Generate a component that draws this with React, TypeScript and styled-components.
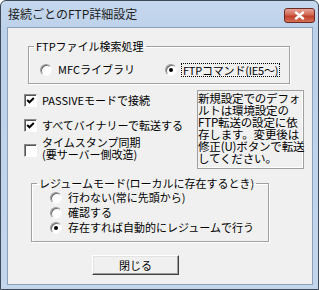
import styled, { createGlobalStyle } from "styled-components";

const GlobalStyle = createGlobalStyle`
  html, body {
    margin: 0;
    padding: 0;
    background: #ffffff;
  }
  body {
    font-family: "Noto Sans CJK JP", "Liberation Sans", sans-serif;
  }
`;

const Window = styled.div`
  width: 319px;
  height: 290px;
  box-sizing: border-box;
  display: flex;
  flex-direction: column;
  border: 1px solid #3e4a57;
  border-radius: 6px 6px 0 0;
  background: linear-gradient(#c6d8ee, #bcd1ea 30px, #c3d6ec);
`;

const TitleBar = styled.div`
  height: 26px;
  display: flex;
  align-items: center;
  justify-content: space-between;
  padding: 0 3px 0 7px;
`;

const Title = styled.span`
  font-size: 12px;
  line-height: 14px;
  color: #1e1e1e;
  margin-top: -1px;
`;

const CloseButton = styled.div`
  width: 29px;
  height: 13px;
  margin-top: 2px;
  border: 1px solid #6b2a22;
  border-radius: 3px;
  background: linear-gradient(#e8a59a, #d1664f 45%, #c0412b 55%, #d46f54);
  display: flex;
  align-items: center;
  justify-content: center;
`;

const Client = styled.div`
  flex: 1;
  margin: 0 5px 4px 6px;
  border: 1px solid #8da2ba;
  background: #f0f0f0;
  padding: 12px 0 0 0;
  display: flex;
  flex-direction: column;
  font-size: 11px;
  color: #000;
`;

const Group = styled.fieldset<{ $left: number; $width: number; $height: number; $top?: number }>`
  margin: ${(p) => p.$top ?? 0}px 0 0 ${(p) => p.$left}px;
  width: ${(p) => p.$width}px;
  height: ${(p) => p.$height}px;
  box-sizing: border-box;
  padding: 0;
  border: 1px solid #a0a0a0;
  box-shadow: inset 1px 1px 0 #ffffff, 1px 1px 0 #ffffff;
  min-width: 0;
`;

const Legend = styled.legend`
  margin-left: 5px;
  padding: 0 2px;
  font-size: 11px;
  line-height: 13px;
`;

const SearchRow = styled.div`
  display: grid;
  grid-template-columns: 125px 1fr;
  padding: 10px 0 0 11px;
`;

const RadioList = styled.div`
  display: flex;
  flex-direction: column;
  gap: 2px;
  padding: 1px 0 0 18px;
`;

const Option = styled.label`
  display: flex;
  align-items: center;
  gap: 6px;
  height: 13px;
  line-height: 13px;
  white-space: nowrap;
`;

const RadioDot = styled.span<{ $on?: boolean }>`
  width: 12px;
  height: 12px;
  box-sizing: border-box;
  flex: none;
  border-radius: 50%;
  border: 1px solid;
  border-color: #9a9a9a #f8f8f8 #f8f8f8 #9a9a9a;
  background: #ffffff;
  box-shadow: inset 1px 1px 0 #6a6a6a;
  display: flex;
  align-items: center;
  justify-content: center;
  &::after {
    content: "";
    width: 4px;
    height: 4px;
    border-radius: 50%;
    background: ${(p) => (p.$on ? "#000" : "transparent")};
  }
`;

const Focused = styled.span`
  border: 1px dotted #000;
  padding: 0 1px;
  margin-left: -2px;
  line-height: 12px;
  letter-spacing: -0.2px;
`;

const Middle = styled.div`
  display: flex;
  align-items: flex-start;
  height: 79px;
  margin-top: 6px;
`;

const Checks = styled.div`
  width: 173px;
  padding: 4px 0 0 16px;
  display: flex;
  flex-direction: column;
  gap: 12px;
`;

const CheckRow = styled.label`
  display: flex;
  align-items: flex-start;
  gap: 5px;
  line-height: 13px;
  white-space: nowrap;
`;

const CheckBox = styled.span`
  width: 13px;
  height: 13px;
  box-sizing: border-box;
  flex: none;
  border: 1px solid;
  border-color: #8a8a8a #ffffff #ffffff #8a8a8a;
  box-shadow: inset 1px 1px 0 #555555;
  background: #ffffff;
  display: flex;
  align-items: center;
  justify-content: center;
`;

const CheckLabel = styled.span<{ $twoLine?: boolean }>`
  line-height: ${(p) => (p.$twoLine ? "12px" : "13px")};
  margin-top: ${(p) => (p.$twoLine ? "-8px" : "0")};
`;

const Note = styled.div`
  width: 107px;
  height: 79px;
  box-sizing: border-box;
  border: 1px solid #a0a0a0;
  box-shadow: inset -1px -1px 0 #ffffff;
  padding: 1px 0 0 0;
  font-size: 11.5px;
  line-height: 12px;
  letter-spacing: -0.15px;
  white-space: nowrap;
`;

const CloseRow = styled.div`
  padding: 13px 0 0 84px;
`;

const PushButton = styled.button`
  width: 87px;
  height: 20px;
  box-sizing: border-box;
  padding: 0;
  font-family: inherit;
  font-size: 11px;
  line-height: 16px;
  color: #000;
  background: #f0f0f0;
  border: 1px solid;
  border-color: #ffffff #404040 #404040 #ffffff;
  box-shadow: inset -1px -1px 0 #a0a0a0, inset 1px 1px 0 #e3e3e3;
`;

function Check() {
  return (
    <svg width="9" height="9" viewBox="0 0 9 9">
      <polyline points="1.2,4 3.5,6.3 7.8,2" fill="none" stroke="#000" strokeWidth="2" />
    </svg>
  );
}

export default function App() {
  return (
    <>
      <GlobalStyle />
      <Window>
        <TitleBar>
          <Title>接続ごとのFTP詳細設定</Title>
          <CloseButton>
            <svg width="11" height="9" viewBox="0 0 11 9">
              <path d="M2 1.5 L9 7.5 M9 1.5 L2 7.5" stroke="#ffffff" strokeWidth="2.4" strokeLinecap="round" />
            </svg>
          </CloseButton>
        </TitleBar>
        <Client>
          <Group $left={20} $width={262} $height={44}>
            <Legend>FTPファイル検索処理</Legend>
            <SearchRow>
              <Option>
                <RadioDot />
                MFCライブラリ
              </Option>
              <Option>
                <RadioDot $on />
                <Focused>FTPコマンド(IE5〜)</Focused>
              </Option>
            </SearchRow>
          </Group>

          <Middle>
            <Checks>
              <CheckRow>
                <CheckBox>
                  <Check />
                </CheckBox>
                <CheckLabel>PASSIVEモードで接続</CheckLabel>
              </CheckRow>
              <CheckRow>
                <CheckBox>
                  <Check />
                </CheckBox>
                <CheckLabel>すべてバイナリーで転送する</CheckLabel>
              </CheckRow>
              <CheckRow>
                <CheckBox />
                <CheckLabel $twoLine>
                  タイムスタンプ同期
                  <br />
                  (要サーバー側改造)
                </CheckLabel>
              </CheckRow>
            </Checks>
            <Note>
              新規設定でのデフォ
              <br />
              ルトは環境設定の
              <br />
              FTP転送の設定に依
              <br />
              存します。変更後は
              <br />
              修正(U)ボタンで転送
              <br />
              してください。
            </Note>
          </Middle>

          <Group $left={23} $width={238} $height={65} $top={8}>
            <Legend>レジュームモード(ローカルに存在するとき)</Legend>
            <RadioList>
              <Option>
                <RadioDot />
                行わない(常に先頭から)
              </Option>
              <Option>
                <RadioDot />
                確認する
              </Option>
              <Option>
                <RadioDot $on />
                存在すれば自動的にレジュームで行う
              </Option>
            </RadioList>
          </Group>

          <CloseRow>
            <PushButton>閉じる</PushButton>
          </CloseRow>
        </Client>
      </Window>
    </>
  );
}
